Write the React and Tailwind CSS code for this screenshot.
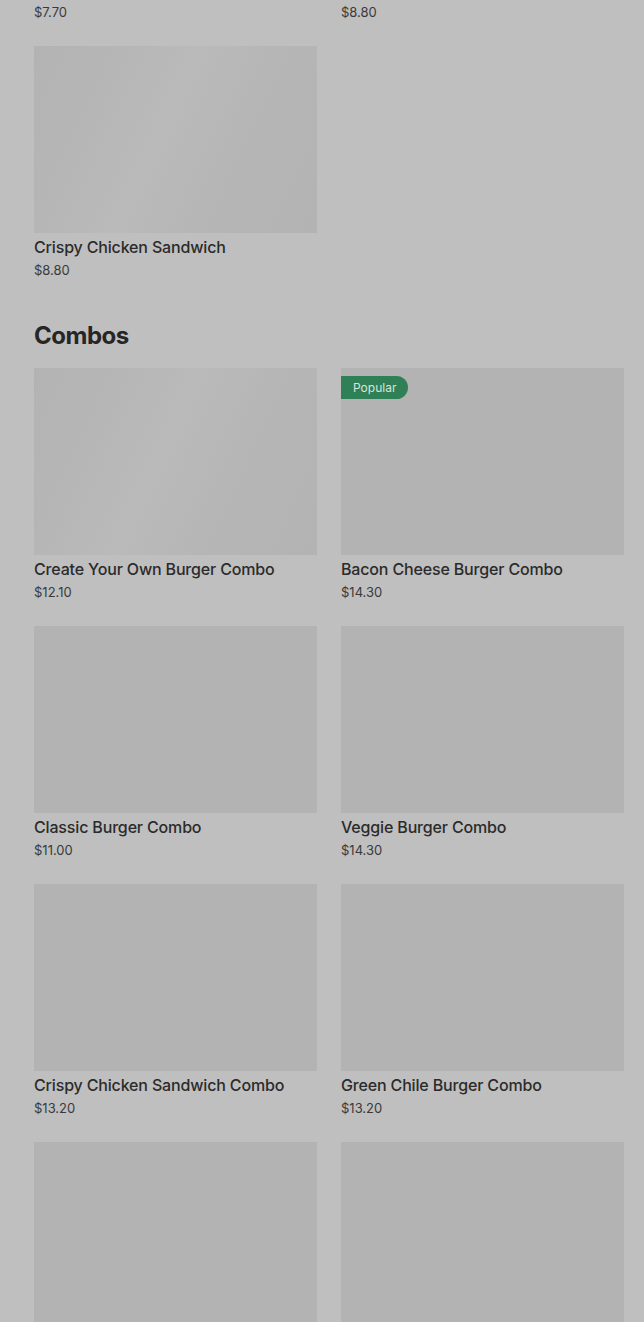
import React from "react";

const shimmer =
  "bg-[linear-gradient(115deg,#b3b3b3_0%,#b6b6b6_25%,#bababa_45%,#b6b6b6_65%,#b3b3b3_100%)]";

function Card({ title, price, popular, shimmerBg }) {
  return (
    <div>
      <div className={`relative h-[187px] ${shimmerBg ? shimmer : "bg-[#b3b3b3]"}`}>
        {popular && (
          <div className="absolute left-0 top-[8px] flex h-[23px] items-center rounded-r-full bg-[#2f7f57] pl-[12px] pr-[12px] text-[12px] leading-[16px] text-[#d6e6dd]">
            Popular
          </div>
        )}
      </div>
      <div className="mt-[2px] text-[16px] font-medium leading-[24px] tracking-[-0.01em] text-[#2b2b2b]">
        {title}
      </div>
      <div className="mt-[1px] text-[13px] leading-[20px] text-[#3a3a3a]">{price}</div>
    </div>
  );
}

export default function App() {
  const top = [
    { title: "Bacon Cheese Burger", price: "$7.70", shimmerBg: true },
    { title: "Spicy Chicken Sandwich", price: "$8.80" },
    { title: "Crispy Chicken Sandwich", price: "$8.80", shimmerBg: true },
  ];
  const combos = [
    { title: "Create Your Own Burger Combo", price: "$12.10", shimmerBg: true },
    { title: "Bacon Cheese Burger Combo", price: "$14.30", popular: true },
    { title: "Classic Burger Combo", price: "$11.00" },
    { title: "Veggie Burger Combo", price: "$14.30" },
    { title: "Crispy Chicken Sandwich Combo", price: "$13.20" },
    { title: "Green Chile Burger Combo", price: "$13.20" },
    { title: "Double Cheese Burger Combo", price: "$15.40" },
    { title: "Turkey Burger Combo", price: "$13.20" },
  ];
  return (
    <div className="h-[1322px] overflow-hidden bg-[#bfbfbf] pl-[34px] pr-[20px] font-['Inter','Liberation_Sans',sans-serif]">
      <div className="-mt-[212px] grid grid-cols-2 gap-x-[24px] gap-y-[24px]">
        {top.map((c) => (
          <Card key={c.title} {...c} />
        ))}
      </div>
      <h2 className="mt-[40px] mb-[16px] text-[24px] font-bold leading-[32px] tracking-[-0.02em] text-[#262626]">
        Combos
      </h2>
      <div className="grid grid-cols-2 gap-x-[24px] gap-y-[24px]">
        {combos.map((c) => (
          <Card key={c.title} {...c} />
        ))}
      </div>
    </div>
  );
}
